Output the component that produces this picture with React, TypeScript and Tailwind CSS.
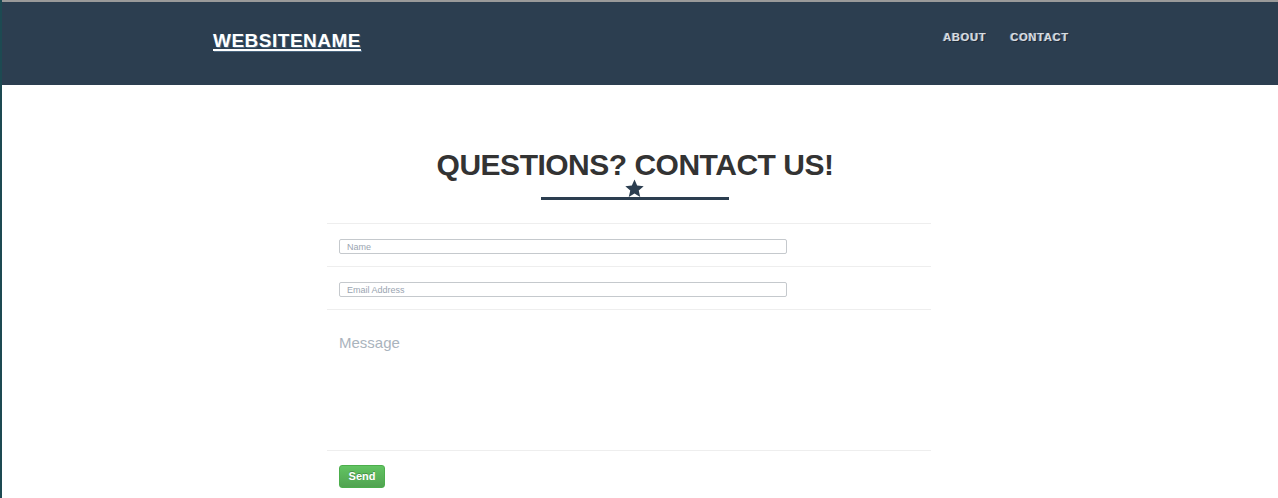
const FONT = "font-['Liberation_Sans',Arial,sans-serif]";

export default function App() {
  return (
    <div className={`flex min-h-[498px] w-full bg-[#1d4a52] ${FONT}`}>
      <div className="ml-[2px] flex flex-1 flex-col bg-white">
        <div className="h-[2px] bg-[#9a9a9a]" />
        {/* Navbar */}
        <header className="flex h-[83px] items-center justify-between bg-[#2c3e50] pl-[211px] pr-[209px]">
          <a
            href="#"
            className="mb-[4px] text-[19px] font-bold tracking-[0.5px] text-white underline decoration-2 underline-offset-[2px] [text-shadow:1px_1px_0_#4a6680]"
          >
            WEBSITENAME
          </a>
          <nav className="mb-[12px] flex gap-[24px] text-[11px] font-bold tracking-[0.8px] text-[#d8dde2] [text-shadow:1px_1px_0_#1c2834,-1px_0_0_#8a99a8]">
            <a href="#">ABOUT</a>
            <a href="#">CONTACT</a>
          </nav>
        </header>

        {/* Contact section */}
        <section className="flex flex-col items-center pr-[22px] pt-[60px]">
          <h2 className="pl-[12px] text-[30px] font-bold leading-[40px] tracking-[-0.5px] text-[#333333]">
            QUESTIONS? CONTACT US!
          </h2>
          <div className="relative ml-[12px] mt-[12px] h-[3px] w-[188px] bg-[#2c3e50]">
            <svg
              viewBox="0 0 24 24"
              className="absolute left-[83px] top-[-19px] h-[21px] w-[21px] fill-[#2c3e50]"
            >
              <path d="M12 1.8l3.05 6.9 7.45.65-5.65 4.95 1.7 7.35L12 17.8l-6.55 3.85 1.7-7.35L1.5 9.35l7.45-.65z" />
            </svg>
          </div>

          <form className="mt-[23px] w-[604px]">
            <div className="border-t border-[#eeeeee] px-[12px] pb-[12px] pt-[15px]">
              <input
                placeholder="Name"
                className="block h-[15px] w-[448px] rounded-[2px] border border-[#c5c9cd] px-[7px] text-[9px] text-[#555] placeholder:text-[#9aa5b1] focus:outline-none"
              />
            </div>
            <div className="border-t border-[#eeeeee] px-[12px] pb-[12px] pt-[15px]">
              <input
                placeholder="Email Address"
                className="block h-[15px] w-[448px] rounded-[2px] border border-[#c5c9cd] px-[7px] text-[9px] text-[#555] placeholder:text-[#9aa5b1] focus:outline-none"
              />
            </div>
            <div className="border-t border-[#eeeeee] px-[12px] pt-[22px]">
              <textarea
                placeholder="Message"
                className="block h-[118px] w-full resize-none text-[15px] text-[#555] placeholder:text-[#aab4bd] focus:outline-none"
              />
            </div>
            <div className="border-t border-[#eeeeee] px-[12px] pt-[12px]">
              <button
                type="button"
                className="h-[23px] w-[46px] rounded-[3px] border border-[#4cae4c] bg-gradient-to-b from-[#62c462] to-[#51a351] text-[11px] font-bold text-white [text-shadow:0_-1px_0_rgba(0,0,0,0.25)]"
              >
                Send
              </button>
            </div>
          </form>
        </section>
      </div>
    </div>
  );
}
